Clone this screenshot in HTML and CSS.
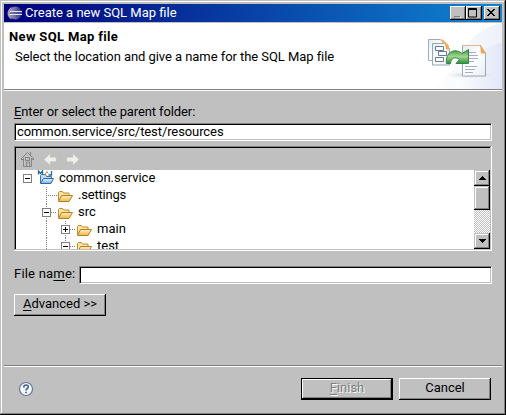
FILE: index.html
```html
<!DOCTYPE html>
<html lang="en">
<head>
<meta charset="utf-8">
<title>Create a new SQL Map file</title>
<link rel="stylesheet" href="styles.css">
</head>
<body>
<svg class="defs" width="0" height="0" aria-hidden="true">
  <defs>
    <linearGradient id="gold" x1="0" y1="0" x2="0" y2="1"><stop offset="0" stop-color="#fff3bd"/><stop offset="1" stop-color="#efb54a"/></linearGradient>
    <linearGradient id="blue" x1="0" y1="0" x2="0" y2="1"><stop offset="0" stop-color="#e8f4ff"/><stop offset="1" stop-color="#76aee4"/></linearGradient>
    <symbol id="folder" viewBox="0 0 16 16">
      <path d="M1.500 12.500V4.500l1-1h3l1 1.500h5.500V8" fill="#fbe5a0" stroke="#c18a2c"/>
      <path d="M1.500 13.500L4.500 7.500H15.500L12 13.500z" fill="url(#gold)" stroke="#bd7b21"/>
    </symbol>
  </defs>
</svg>
<div class="window">
  <header class="titlebar">
    <svg class="app-icon" width="16" height="16" viewBox="0 0 16 16">
      <defs><linearGradient id="ball" x1="0" y1="0" x2="1" y2="0"><stop offset="0" stop-color="#a9a2bf"/><stop offset=".45" stop-color="#6f6fa6"/><stop offset="1" stop-color="#25287c"/></linearGradient></defs>
      <path d="M5 1.500C-1 5-1 12 5 14.500C2.500 10 2.500 6 5 1.500" fill="#b99aa9"/>
      <circle cx="8.500" cy="8" r="6.500" fill="url(#ball)"/>
      <path d="M3 6.500h12M2.500 9.500h12.500" stroke="#e4e4f5"/>
      <path d="M3 8h12" stroke="#55589b"/>
    </svg>
    <h1 class="title">Create a new SQL Map file</h1>
    <div class="controls">
      <button class="ctl" aria-label="Minimize"><svg width="12" height="10"><path d="M4 9h6v1H4z" fill="#fff"/><path d="M3 8h6v1.500H3z" fill="#808080"/></svg></button>
      <button class="ctl" aria-label="Maximize"><svg width="12" height="10"><path d="M1.500 .5h8v8.500h-8zM1 1.500h9" fill="none" stroke="#000"/></svg></button>
      <button class="ctl close" aria-label="Close"><svg width="12" height="10" shape-rendering="crispEdges"><path d="M2 1h2v1h1v1h2V2h1V1h2v1H9v1H8v1H7v1h1v1h1v1h1v1H8V7H7V6H5v1H4v1H2V7h1V6h1V5h1V4H4V3H3V2H2z" fill="#000"/></svg></button>
    </div>
  </header>
  <section class="banner">
    <div class="banner-text">
      <h2>New SQL Map file</h2>
      <p>Select the location and give a name for the SQL Map file</p>
    </div>
    <svg class="banner-art" width="82" height="66" viewBox="0 0 82 66">
      <defs>
        <linearGradient id="haze"><stop offset="0" stop-color="#fff"/><stop offset="1" stop-color="#dfe5f7"/></linearGradient>
        <linearGradient id="page" x1="0" y1="0" x2="1" y2="1"><stop offset="0" stop-color="#e3edf7"/><stop offset=".5" stop-color="#fff"/><stop offset="1" stop-color="#e4edf5"/></linearGradient>
        <linearGradient id="green" x1="0" y1="0" x2="0" y2="1"><stop offset="0" stop-color="#3b9842"/><stop offset=".5" stop-color="#a3d58f"/><stop offset="1" stop-color="#2e8c39"/></linearGradient>
        <radialGradient id="shade"><stop offset="0" stop-color="#a9b0cb" stop-opacity=".7"/><stop offset="1" stop-color="#fff" stop-opacity="0"/></radialGradient>
      </defs>
      <path d="M82 0C60 5 46 18 39 34C33 48 24 58 10 66H82z" fill="url(#haze)" opacity=".55"/>
      <path d="M82 20C52 26 39 46 34 66H82z" fill="url(#haze)" opacity=".8"/>
      <ellipse cx="50" cy="52" rx="31" ry="4" fill="url(#shade)"/>
      <path d="M8.500 16.500h12l5 6v15h-17z" fill="url(#page)" stroke="#9bafb5"/>
      <path d="M12.500 20.500h12l5 5.500v16h-17z" fill="url(#page)" stroke="#93a9b0"/>
      <path d="M20 16.500l9 9v-3l-6-6z" fill="#f1b765"/><path d="M25 20l5 6.500h-4z" fill="#f4a64e"/>
      <path d="M15.500 23.500h8v4h-8zM18.500 28.500h8v4h-8zM15.500 34.500h8v4h-8z" fill="#fff" stroke="#617a9e"/>
      <path d="M42.500 22.500h18l5 8v22.500h-23z" fill="url(#page)" stroke="#9aabae"/>
      <path d="M42 22.500h18" stroke="#e6b782"/>
      <path d="M60 22l6 8.500h-5z" fill="#f4a64e"/>
      <path d="M46 29.500h10M48 32.500h10M48 35.500h10M48 38.500h6M45 43.500h12M45 46.500h10M45 49.500h8" stroke="#a6acc6"/>
      <path d="M26.500 40.500C25 30 34 24 42 30.500L48.500 26.500V40.500H36L39.500 36.500C35 33 31 35 30.500 40.500z" fill="url(#green)" stroke="#2f8740"/>
    </svg>
  </section>
  <main class="content">
    <label class="folder-label"><u>E</u>nter or select the parent folder:</label>
    <div class="field path">common.service/src/test/resources</div>
    <div class="browser">
      <div class="toolbar">
        <svg width="66" height="18" viewBox="0 0 66 18">
          <path d="M1 9L7.500 2.500L14 9M10.500 2v3M3.500 8v8.500h8V8M5.500 7.500h4v3h-4zM6.500 16v-4h3v4M1 9.500h3M11 9.500h3" fill="none" stroke="#858585"/>
          <path d="M24 9.500l6-5.500v3.500h6v4h-6V15z" fill="#efefeb" stroke="#d3d3cc" stroke-width=".6"/>
          <path d="M59 9.500L53 4v3.500h-6v4h6V15z" fill="#efefeb" stroke="#d3d3cc" stroke-width=".6"/>
        </svg>
      </div>
      <div class="tree-area">
        <div class="tree">
          <div class="node l0"><i class="box"></i><svg class="proj" width="18" height="17" viewBox="0 0 18 17"><path d="M3.500 13V5.500l1-1h4l1 2h5V9" fill="#bedaf5" stroke="#4470a4"/><path d="M3.500 13.500L6.500 8.500h10L14 13.500z" fill="url(#blue)" stroke="#2e69af"/><path d="M1.500 4.500V1L3.500 3.500l2-2.500V4.500M14.500 1v4h-3" fill="none" stroke="#276b9d" stroke-width="1.300"/><path d="M8 4.500l2-3 1 2" fill="none" stroke="#c39848"/></svg><span>common.service</span></div>
          <div class="node l1 guide1"><i class="branch"></i><svg width="16" height="16"><use href="#folder"/></svg><span class="settings">.settings</span></div>
          <div class="node l1 guide1"><i class="box"></i><i class="dash"></i><svg width="16" height="16"><use href="#folder"/></svg><span>src</span></div>
          <div class="node l2 guide1 guide2"><i class="box plus"></i><i class="dash"></i><svg width="16" height="16"><use href="#folder"/></svg><span>main</span></div>
          <div class="node l2 guide1 guide2"><i class="box"></i><i class="dash"></i><svg width="16" height="16"><use href="#folder"/></svg><span>test</span></div>
        </div>
        <div class="scrollbar">
          <div class="sb-btn"><svg width="7" height="4" shape-rendering="crispEdges"><path d="M3 0h1v1h1v1h1v1h1v1H0V3h1V2h1V1h1z"/></svg></div>
          <div class="thumb"></div>
          <div class="track"></div>
          <div class="sb-btn"><svg width="7" height="4" shape-rendering="crispEdges"><path d="M0 0h7v1H6v1H5v1H4v1H3V3H2V2H1V1H0z"/></svg></div>
        </div>
      </div>
    </div>
    <div class="name-row">
      <label class="name-label">File na<u>m</u>e:</label>
      <div class="field"></div>
    </div>
    <button class="btn advanced"><u>A</u>dvanced &gt;&gt;</button>
  </main>
  <footer class="footer">
    <svg width="16" height="16" viewBox="0 0 16 16"><circle cx="8" cy="8" r="6.500" fill="#f5faff" stroke="#657796" stroke-width="1.200"/><path d="M5.800 6.500C5.500 3.300 10.500 3.200 10.300 6C10.200 7.600 8 7.500 8 9.500M8 10.700v1.600" fill="none" stroke="#44618d" stroke-width="1.700"/></svg>
    <div class="actions">
      <button class="btn default" disabled><u>F</u>inish</button>
      <button class="btn">Cancel</button>
    </div>
  </footer>
</div>
</body>
</html>
```
FILE: styles.css
```css
* { box-sizing: border-box; }
body { margin: 0; font: 13px/16px Roboto, "Liberation Sans", sans-serif; color: #000; }
h1, h2, p { margin: 0; font-size: 13px; font-weight: 400; }
svg { display: block; flex: none; }
.defs { position: absolute; }
u { text-decoration: underline; text-underline-offset: 2px; text-decoration-thickness: 1px; }
span, label, h1, h2, p, .field { white-space: nowrap; }
.window {
  width: 506px; height: 415px; padding: 4px 3px 2px 4px; background: #c0c0c0;
  display: flex; flex-direction: column;
  box-shadow: inset -1px -1px #000, inset 1px 1px #c0c0c0, inset -2px -2px #808080, inset 2px 2px #fff;
}
.titlebar { width: 498px; height: 18px; display: flex; align-items: center; padding: 0 2px; background: linear-gradient(90deg, #00007b, #1084d0); color: #fff; }
.app-icon { margin-left: 1px; }
.title { margin-left: 2px; flex: 1; }
.controls { display: flex; }
.ctl { width: 16px; height: 14px; padding: 1px; border: 0; background: #c0c0c0; box-shadow: inset -1px -1px #000, inset 1px 1px #fff, inset -2px -2px #808080; }
.close { margin-left: 2px; }
.banner { width: 498px; height: 68px; margin-top: 1px; background: #fff; border-bottom: 1px solid #fff; box-shadow: inset 0 -1px #808080; display: flex; justify-content: space-between; }
.banner-text { padding: 6px 0 0 5px; }
.banner-text h2 { font-weight: 700; letter-spacing: .35px; }
.banner-text p { margin: 4px 0 0 6px; letter-spacing: -.06px; }
.content { padding: 13px 10px 0; height: 274px; }
.folder-label { display: block; height: 19px; letter-spacing: -.11px; }
.field { height: 18px; padding: 0 2px; background: #fff; border: 1px solid; border-color: #808080 #fff #fff #808080; box-shadow: inset 1px 1px #000, inset -1px -1px #c0c0c0; width: 478px; }
.path { letter-spacing: -.09px; }
.browser { width: 478px; height: 105px; margin-top: 5px; padding: 2px; box-shadow: inset -1px -1px #fff, inset 1px 1px #808080, inset -2px -2px #c0c0c0, inset 2px 2px #000; }
.toolbar { height: 22px; padding: 2px 0 0 4px; }
.tree-area { display: flex; height: 79px; }
.tree { width: 458px; background: #fff; overflow: hidden; }
.node { height: 17px; display: flex; align-items: center; position: relative; }
.node span { margin: -1px 0 0 5px; }
.node .settings { letter-spacing: -.2px; }
.l0 { padding-left: 7px; }
.l1 { padding-left: 26px; }
.l2 { padding-left: 45px; }
.box { width: 9px; height: 9px; border: 1px solid #808080; background: linear-gradient(#000, #000) center / 5px 1px no-repeat #fff; z-index: 1; }
.box.plus { background: linear-gradient(#000, #000) center / 5px 1px no-repeat, linear-gradient(#000, #000) center / 1px 5px no-repeat #fff; }
.proj { margin: 0 0 0 5px; }
.l0 .proj + span { margin-left: 4px; }
.dash { width: 6px; height: 1px; background: repeating-linear-gradient(90deg, #808080 0 1px, #fff 1px 2px); }
.branch { width: 11px; height: 1px; margin-left: 4px; background: repeating-linear-gradient(90deg, #808080 0 1px, #fff 1px 2px); }
.guide1::before, .guide2::after { content: ""; position: absolute; top: 0; bottom: 0; left: 30px; width: 1px; background: repeating-linear-gradient(#808080 0 1px, #fff 1px 2px); }
.guide2::after { left: 49px; }
.scrollbar { width: 16px; display: flex; flex-direction: column; }
.sb-btn, .thumb { background: #c0c0c0; box-shadow: inset -1px -1px #000, inset 1px 1px #c0c0c0, inset -2px -2px #808080, inset 2px 2px #fff; }
.sb-btn { height: 16px; display: flex; align-items: center; justify-content: center; }
.thumb { height: 24px; }
.track { flex: 1; background: repeating-conic-gradient(#c0c0c0 0 25%, #fff 0 50%) 0 0 / 2px 2px; }
.name-row { display: flex; justify-content: space-between; margin-top: 15px; width: 478px; }
.name-row .field { width: 413px; }
.name-label { letter-spacing: .2px; }
.btn { width: 92px; height: 22px; padding: 0 0 2px; border: 0; font: inherit; color: #000; background: #c0c0c0; box-shadow: inset -1px -1px #000, inset 1px 1px #fff, inset -2px -2px #808080; }
.advanced { display: block; margin-top: 10px; }
.default { color: #808080; text-shadow: 1px 1px #fff; box-shadow: inset 0 0 0 1px #000, inset -2px -2px #000, inset 2px 2px #fff, inset -3px -3px #808080; }
.footer { width: 498px; height: 48px; display: flex; justify-content: space-between; align-items: flex-start; border-top: 1px solid #808080; box-shadow: inset 0 1px #fff; padding: 12px 11px 0 14px; }
.footer > svg { margin-top: 3px; }
.actions { display: flex; gap: 6px; }
```
